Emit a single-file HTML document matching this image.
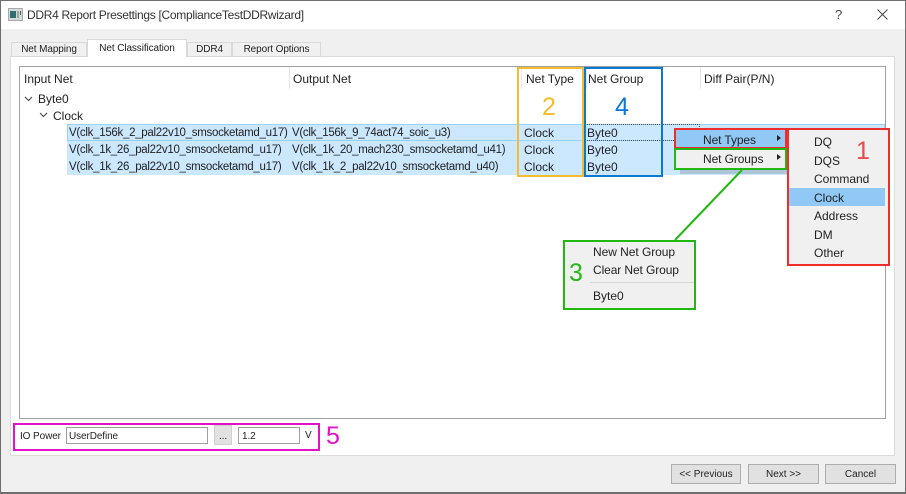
<!DOCTYPE html>
<html><head><meta charset="utf-8"><style>
html,body{margin:0;padding:0}
body{width:906px;height:494px;position:relative;overflow:hidden;background:#f0f0f0;font-family:"Liberation Sans",sans-serif;color:#222}
div{position:absolute;box-sizing:border-box;white-space:nowrap}
.t{font-size:12px;line-height:16px;height:16px}
.v{font-size:11.5px;line-height:16px;height:16px;letter-spacing:-.29px}
.s{font-size:10px;letter-spacing:-.1px}
.row{background:#cce8ff;left:67px;width:818px;height:17px}
.btn{background:#e1e1e1;border:1px solid #adadad;font-size:10px;text-align:center;line-height:20px;height:20px;top:464px}
.tab{top:42px;height:15px;background:#f0f0f0;border:1px solid #d9d9d9;font-size:10px;letter-spacing:-.1px;line-height:13px;text-align:center}
.n{font-size:25px;line-height:30px;height:30px}
.sh{background:rgba(0,0,0,.15)}
</style></head><body>
<div style="left:0;top:0;width:906px;height:494px;border:1px solid #6e6e6e;border-bottom:2px solid #6e6e6e;z-index:20;pointer-events:none"></div>
<div style="left:0;top:0;width:906px;height:29px;background:#fff"></div>
<svg style="position:absolute;left:8px;top:8px" width="15" height="14"><rect x=".5" y=".5" width="14" height="12" fill="#d8d8d8" stroke="#aaa"/><rect x="2" y="3" width="6" height="7" fill="#2f6f73"/><rect x="9" y="3" width="2" height="7" fill="#8fa8a8"/><rect x="12" y="3" width="1" height="4" fill="#4a5a5a"/></svg>
<div style="left:27px;top:7px;font-size:12px;line-height:16px;letter-spacing:-.3px;color:#333">DDR4 Report Presettings [ComplianceTestDDRwizard]</div>
<div style="left:835px;top:7px;font-size:13px;line-height:16px;color:#444">?</div>
<svg style="position:absolute;left:877px;top:9px" width="11" height="11"><path d="M.5.5L10.5 10.5M10.5.5L.5 10.5" stroke="#444" stroke-width="1" fill="none"/></svg>

<div style="left:10px;top:56px;width:885px;height:400px;background:#fff;border:1px solid #dcdcdc"></div>
<div class="tab" style="left:11px;width:76px">Net Mapping</div>
<div class="tab" style="left:87px;width:100px;top:39px;height:18px;background:#fff;border-bottom:none;line-height:18px">Net Classification</div>
<div class="tab" style="left:187px;width:45px">DDR4</div>
<div class="tab" style="left:232px;width:89px">Report Options</div>

<div style="left:19px;top:66px;width:867px;height:353px;background:#fff;border:1px solid #a0a0a0"></div>
<div class="t" style="left:24px;top:71px">Input Net</div>
<div class="t" style="left:293px;top:71px">Output Net</div>
<div class="t" style="left:526px;top:71px">Net Type</div>
<div class="t" style="left:588px;top:71px">Net Group</div>
<div class="t" style="left:704px;top:71px">Diff Pair(P/N)</div>
<div style="left:289px;top:67px;width:1px;height:22px;background:#e5e5e5"></div>
<div style="left:521px;top:67px;width:1px;height:22px;background:#e5e5e5"></div>
<div style="left:586px;top:67px;width:1px;height:22px;background:#e5e5e5"></div>
<div style="left:700px;top:67px;width:1px;height:22px;background:#e5e5e5"></div>

<svg style="position:absolute;left:24px;top:95px" width="40" height="26"><path d="M1 2L4.5 5.5L8 2M16 18L19.5 21.5L23 18" stroke="#444" stroke-width="1.1" fill="none"/></svg>
<div class="t" style="left:38px;top:91px">Byte0</div>
<div class="t" style="left:53px;top:108px">Clock</div>

<div class="row" style="top:124px;border:1px solid #99d1ff"></div>
<div class="row" style="top:141px"></div>
<div class="row" style="top:158px"></div>
<div style="left:585px;top:124px;width:115px;height:17px;border:1px dotted #555"></div>

<div class="v" style="left:69px;top:125px">V(clk_156k_2_pal22v10_smsocketamd_u17)</div>
<div class="v" style="left:69px;top:142px">V(clk_1k_26_pal22v10_smsocketamd_u17)</div>
<div class="v" style="left:69px;top:159px">V(clk_1k_26_pal22v10_smsocketamd_u17)</div>
<div class="v" style="left:292px;top:125px">V(clk_156k_9_74act74_soic_u3)</div>
<div class="v" style="left:292px;top:142px">V(clk_1k_20_mach230_smsocketamd_u41)</div>
<div class="v" style="left:292px;top:159px">V(clk_1k_2_pal22v10_smsocketamd_u40)</div>
<div class="t" style="left:524px;top:125px">Clock</div>
<div class="t" style="left:524px;top:142px">Clock</div>
<div class="t" style="left:524px;top:159px">Clock</div>
<div class="t" style="left:587px;top:125px">Byte0</div>
<div class="t" style="left:587px;top:142px">Byte0</div>
<div class="t" style="left:587px;top:159px">Byte0</div>

<div style="left:517px;top:67px;width:67px;height:110px;border:2px solid #f5bd2e"></div>
<div style="left:584px;top:67px;width:79px;height:110px;border:2px solid #0a78d4"></div>
<div class="n" style="left:542px;top:92px;color:#f5bd2e">2</div>
<div class="n" style="left:615px;top:92px;color:#0a78d4">4</div>

<!-- context menu -->
<div class="sh" style="left:680px;top:134px;width:110px;height:40px"></div>
<div style="left:675px;top:130px;width:110px;height:39px;background:#f0f0f0"></div>
<div style="left:675px;top:130px;width:110px;height:18px;background:#90c8f6"></div>
<div class="t" style="left:703px;top:132px;letter-spacing:-.1px">Net Types</div>
<div class="t" style="left:703px;top:151px;letter-spacing:-.1px">Net Groups</div>
<svg style="position:absolute;left:776px;top:135px" width="6" height="28"><path d="M1 0L5 3L1 6ZM1 19L5 22L1 25Z" fill="#222"/></svg>
<div style="left:674px;top:128px;width:113px;height:21px;border:2px solid #f02d2d"></div>
<div style="left:674px;top:148px;width:113px;height:22px;border:2px solid #22b812"></div>

<svg style="position:absolute;left:660px;top:165px" width="90" height="82"><path d="M82 5L15 75" stroke="#22b812" stroke-width="2" fill="none"/></svg>

<!-- types menu -->
<div style="left:787px;top:128px;width:103px;height:138px;background:#f0f0f0;border:2px solid #f02d2d"></div>
<div style="left:789px;top:188px;width:96px;height:18px;background:#90c8f6"></div>
<div class="t" style="left:814px;top:134px">DQ</div>
<div class="t" style="left:814px;top:153px">DQS</div>
<div class="t" style="left:814px;top:171px">Command</div>
<div class="t" style="left:814px;top:190px">Clock</div>
<div class="t" style="left:814px;top:208px">Address</div>
<div class="t" style="left:814px;top:227px">DM</div>
<div class="t" style="left:814px;top:245px">Other</div>
<div class="n" style="left:856px;top:136px;color:#f0484a">1</div>

<!-- groups menu -->
<div style="left:563px;top:240px;width:133px;height:70px;background:#f0f0f0;border:2px solid #22b812"></div>
<div style="left:590px;top:282px;width:104px;height:1px;background:#d7d7d7"></div>
<div class="t" style="left:593px;top:244px;letter-spacing:-.05px">New Net Group</div>
<div class="t" style="left:593px;top:262px;letter-spacing:-.1px">Clear Net Group</div>
<div class="t" style="left:593px;top:288px">Byte0</div>
<div class="n" style="left:569px;top:258px;color:#22b812">3</div>

<!-- io power -->
<div style="left:13px;top:423px;width:307px;height:28px;border:2px solid #e212c8"></div>
<div class="s" style="left:20px;top:428px;line-height:17px">IO Power</div>
<div class="s" style="left:66px;top:427px;width:142px;height:17px;border:1px solid #a0a0a0;padding-left:2px;line-height:17px;background:#fff">UserDefine</div>
<div class="s" style="left:214px;top:425px;width:18px;height:20px;background:#e1e1e1;border:1px solid #d0d0d0;text-align:center;line-height:21px">...</div>
<div class="s" style="left:238px;top:427px;width:62px;height:17px;border:1px solid #a0a0a0;padding-left:3px;line-height:17px;background:#fff">1.2</div>
<div class="s" style="left:305px;top:428px;line-height:16px">V</div>
<div class="n" style="left:326px;top:421px;color:#e212c8">5</div>

<div class="btn" style="left:671px;width:70px">&lt;&lt; Previous</div>
<div class="btn" style="left:748px;width:71px">Next &gt;&gt;</div>
<div class="btn" style="left:825px;width:71px">Cancel</div>
</body></html>
